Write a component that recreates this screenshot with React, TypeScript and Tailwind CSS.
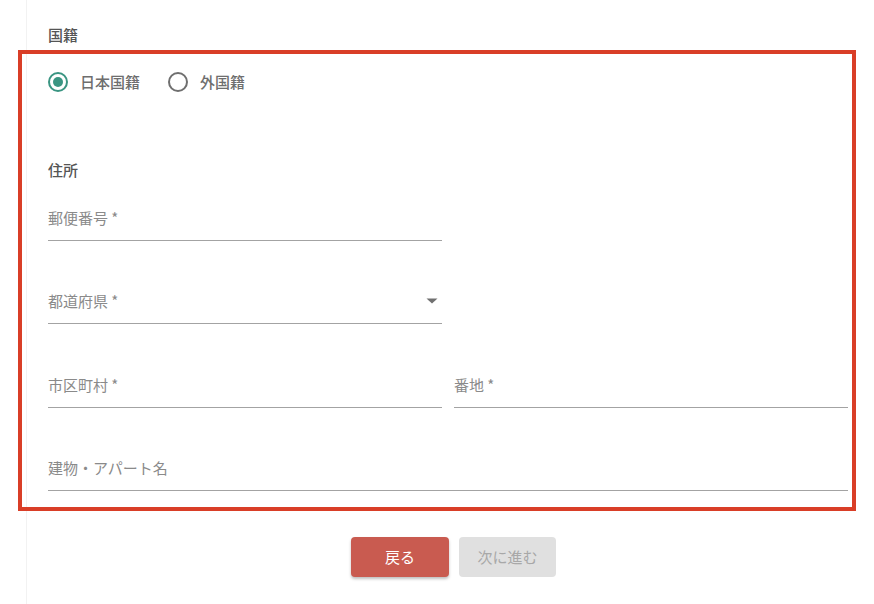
import React from "react";

const font = { fontFamily: '"Noto Sans CJK JP", "Noto Sans", sans-serif' };

function Field({ label, arrow, className = "" }: { label: string; arrow?: boolean; className?: string }) {
  return (
    <div className={"flex flex-col " + className}>
      <div className="flex h-[22px] items-center justify-between text-[15px] leading-[22px] text-[#8a8a8a]">
        <span>{label}</span>
        {arrow && (
          <svg width="12" height="6" viewBox="0 0 12 6" className="mr-[4px]">
            <path d="M0.5 0.5 L11.5 0.5 L6 5.5 Z" fill="#707070" />
          </svg>
        )}
      </div>
      <div className="mt-[11px] h-px bg-[#a3a3a3]" />
    </div>
  );
}

export default function App() {
  return (
    <div className="min-h-[604px] w-[874px] overflow-hidden bg-white" style={font}>
      <div className="ml-[26px] min-h-[604px] border-l border-[#f2f2f2] pl-[21px]">
        <div className="w-[800px]">
          <div className="pt-[24px] text-[15px] font-medium leading-[22px] text-[#555]">国籍</div>
          <div className="-ml-[30px] mt-[4px] w-[838px] border-4 border-[#d93e27] pb-[16px] pl-[26px] pr-[4px] pt-[16px]">
            <div className="flex h-[24px] items-center">
              <div className="flex items-center">
                <div className="flex h-[20px] w-[20px] items-center justify-center rounded-full border-2 border-[#3a9582]">
                  <div className="h-[10px] w-[10px] rounded-full bg-[#3a9582]" />
                </div>
                <span className="ml-[12px] text-[15px] font-medium text-[#6e6e6e]">日本国籍</span>
              </div>
              <div className="ml-[28px] flex items-center">
                <div className="h-[20px] w-[20px] rounded-full border-2 border-[#6f6f6f]" />
                <span className="ml-[12px] text-[15px] font-medium text-[#6e6e6e]">外国籍</span>
              </div>
            </div>
            <div className="mt-[65px] text-[15px] font-medium leading-[22px] text-[#555]">住所</div>
            <Field label="郵便番号 *" className="mt-[26px] w-[394px]" />
            <Field label="都道府県 *" arrow className="mt-[49px] w-[394px]" />
            <div className="mt-[50px] flex gap-[12px]">
              <Field label="市区町村 *" className="flex-1" />
              <Field label="番地 *" className="flex-1" />
            </div>
            <Field label="建物・アパート名" className="mt-[49px]" />
          </div>
          <div className="mt-[26px] flex justify-center gap-[10px] pl-[11px]">
            <button className="h-[40px] w-[98px] rounded-[4px] bg-[#c95b50] text-[15px] text-white shadow-[0_2px_3px_rgba(0,0,0,0.25)]">
              戻る
            </button>
            <button className="h-[40px] w-[97px] rounded-[4px] bg-[#e0e0e0] text-[15px] text-[#a8a8a8]">
              次に進む
            </button>
          </div>
        </div>
      </div>
    </div>
  );
}
